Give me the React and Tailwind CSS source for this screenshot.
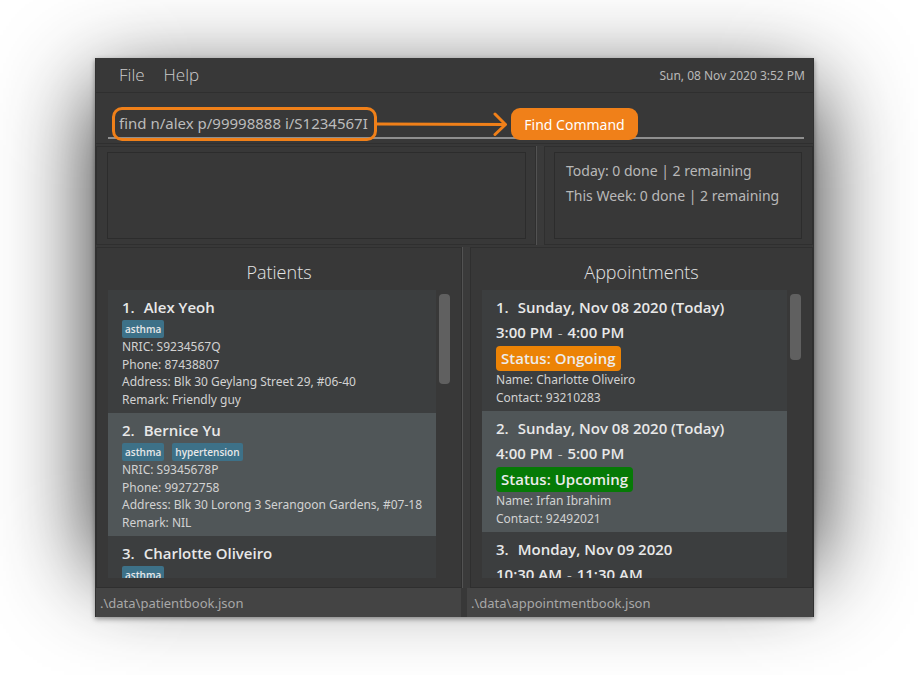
const patients = [
  { name: "Alex Yeoh", tags: ["asthma"], lines: ["NRIC: S9234567Q", "Phone: 87438807", "Address: Blk 30 Geylang Street 29, #06-40", "Remark: Friendly guy"] },
  { name: "Bernice Yu", tags: ["asthma", "hypertension"], lines: ["NRIC: S9345678P", "Phone: 99272758", "Address: Blk 30 Lorong 3 Serangoon Gardens, #07-18", "Remark: NIL"] },
  { name: "Charlotte Oliveiro", tags: ["asthma"], lines: [] },
];

const appointments = [
  { date: "Sunday, Nov 08 2020 (Today)", from: "3:00 PM", to: "4:00 PM", status: "Status: Ongoing", color: "bg-[#ec8305]", lines: ["Name: Charlotte Oliveiro", "Contact: 93210283"] },
  { date: "Sunday, Nov 08 2020 (Today)", from: "4:00 PM", to: "5:00 PM", status: "Status: Upcoming", color: "bg-[#067a06]", lines: ["Name: Irfan Ibrahim", "Contact: 92492021"] },
  { date: "Monday, Nov 09 2020", from: "10:30 AM", to: "11:30 AM", lines: [] },
];

function Divider() {
  return <div className="w-2 shrink-0 border-l border-[#525252] bg-[#3a3a3a]" />;
}

function ListPane({ title, thumb, children }) {
  return (
    <section className="flex h-full flex-col border border-[#2f2f2f] pr-[11px] pb-[9px] pl-[11px]">
      <h2 className="h-[42px] pt-[10px] text-center text-[18px] leading-[28px] font-light text-[#e4e4e4]">{title}</h2>
      <div className="flex gap-[3px]">
        <ol className="h-72 min-w-0 flex-1 overflow-hidden">{children}</ol>
        <div className="w-[11px] pt-1">
          <div className={"rounded bg-[#606060] " + thumb} />
        </div>
      </div>
    </section>
  );
}

function Row({ index, title, children }) {
  return (
    <li className={"px-[14px] py-[5px] whitespace-nowrap " + (index % 2 ? "bg-[#505658]" : "bg-[#3c3e3f]")}>
      <h3 className="flex gap-[9px] text-[15px] leading-[25px] font-semibold text-[#e8e8e8]">
        <span>{index + 1}.</span>
        <span>{title}</span>
      </h3>
      {children}
    </li>
  );
}

export default function App() {
  return (
    <main className="min-h-screen bg-white pt-[58px] pr-[104px] pb-[58px] pl-[95px] font-['Open_Sans','Noto_Sans',sans-serif]">
      <div className="relative isolate">
        <div className="absolute inset-x-0 top-[30px] bottom-[46px] -z-10 shadow-[0_0_88px_rgba(0,0,0,0.85)]" />
        <div className="flex flex-col border-x border-[#313131] bg-[#383838] text-[#cccccc] shadow-[0_2px_5px_rgba(0,0,0,0.4)]">
          <header className="flex h-[34px] items-center pr-2 pl-[23px]">
            <nav className="flex flex-1 gap-[19px] text-[17px] font-light">
              <button type="button">File</button>
              <button type="button">Help</button>
            </nav>
            <time className="pt-px font-['Noto_Sans',sans-serif] text-[12px] text-[#b8b8b8]">Sun, 08 Nov 2020 3:52 PM</time>
          </header>

          <div className="h-[52px] border-y border-[#2f2f2f] pt-[14px] pr-[9px] pl-3">
            <div className="relative">
              <input
                id="command"
                type="text"
                defaultValue="find n/alex p/99998888 i/S1234567I"
                className="block h-8 w-full border-b-2 border-[#8f8f8f] bg-transparent pt-px pl-[11px] font-['Noto_Sans',sans-serif] text-[15px] text-[#bcbcbc] outline-none"
              />
              <div className="pointer-events-none absolute top-0 left-1 flex h-[33px] items-center">
                <div className="h-[34px] w-[265px] rounded-[10px] border-[3px] border-[#f08019]" />
                <svg className="h-[26px] w-[130px]" viewBox="0 0 130 26" fill="none" stroke="#f08019" strokeWidth="3" strokeLinecap="round" strokeLinejoin="round" aria-hidden="true">
                  <path d="M0 13L128 13.500M118 3L128.500 13.500L118 23.500" />
                </svg>
                <label htmlFor="command" className="ml-1 flex h-8 w-[127px] items-center justify-center rounded-[9px] bg-[#f08019] pt-px font-['Noto_Sans',sans-serif] text-[14px] text-white">
                  Find Command
                </label>
              </div>
            </div>
          </div>

          <div className="mt-[2px] grid grid-cols-[448fr_269fr]">
            <div className="flex">
              <div className="h-[99px] flex-1 border border-[#2f2f2f] py-[5px] pr-[9px] pl-[10px]">
                <div className="h-full border border-[#2c2c2c]" />
              </div>
              <Divider />
            </div>
            <div className="h-[99px] border border-[#2f2f2f] py-[5px] pr-[10px] pl-[9px]">
              <div className="h-full border border-[#2c2c2c] pt-[5px] pl-[11px] font-['Noto_Sans',sans-serif] text-[14px] leading-[25px] whitespace-nowrap text-[#b8b8b8]">
                <p>Today: 0 done | 2 remaining</p>
                <p>This Week: 0 done | 2 remaining</p>
              </div>
            </div>
          </div>

          <div className="mt-[2px] grid grid-cols-[371fr_346fr]">
            <div className="flex">
              <div className="min-w-0 flex-1">
                <ListPane title="Patients" thumb="h-[90px]">
                  {patients.map((p, i) => (
                    <Row key={p.name} index={i} title={p.name}>
                      <div className="flex gap-2">
                        {p.tags.map((t) => (
                          <span key={t} className="h-[18px] rounded-xs bg-[#3d7188] px-[3px] text-[10px] leading-[18px] font-semibold text-[#e8e8e8]">{t}</span>
                        ))}
                      </div>
                      {p.lines.length > 0 && (
                        <div className="grid h-[70px] grid-rows-4 items-center font-['Noto_Sans',sans-serif] text-[12px] leading-[17px] text-[#d2d2d2]">
                          {p.lines.map((l) => <p key={l}>{l}</p>)}
                        </div>
                      )}
                    </Row>
                  ))}
                </ListPane>
              </div>
              <Divider />
            </div>
            <ListPane title="Appointments" thumb="h-[66px]">
              {appointments.map((a, i) => (
                <Row key={a.from} index={i} title={a.date}>
                  <p className="pb-px text-[15px] leading-[25px] font-semibold text-[#e8e8e8]">
                    {a.from} <span className="mx-px font-light">-</span> {a.to}
                  </p>
                  {a.status && (
                    <>
                      <p className={"h-[25px] w-fit rounded-[4px] px-[5px] text-[15px] leading-[25px] font-semibold text-[#ececec] " + a.color}>{a.status}</p>
                      <div className="grid h-[35px] grid-rows-2 items-center font-['Noto_Sans',sans-serif] text-[12px] leading-[17px] text-[#d2d2d2]">
                        {a.lines.map((l) => <p key={l}>{l}</p>)}
                      </div>
                    </>
                  )}
                </Row>
              ))}
            </ListPane>
          </div>

          <footer className="grid h-[29px] grid-cols-[371fr_346fr] font-['Noto_Sans',sans-serif] text-[13px] leading-[28px] text-[#a8a8a8]">
            <p className="mr-[6px] bg-[#444444] pt-px pl-1">.\data\patientbook.json</p>
            <p className="bg-[#444444] pt-px pl-1">.\data\appointmentbook.json</p>
          </footer>
        </div>
      </div>
    </main>
  );
}
